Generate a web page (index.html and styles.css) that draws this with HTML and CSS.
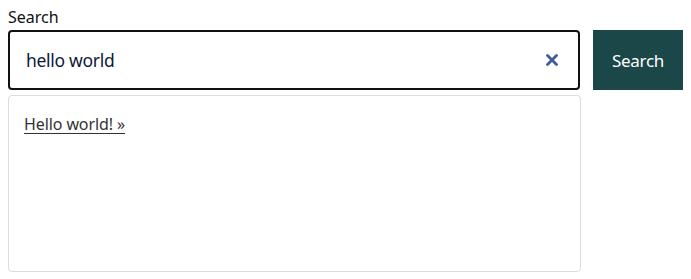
FILE: index.html
```html
<!DOCTYPE html>
<html>
<head>
<meta charset="utf-8">
<link rel="stylesheet" href="styles.css">
</head>
<body>
<div class="search">
  <label class="label" for="q">Search</label>
  <div class="row">
    <div class="field">
      <div class="input-box">
        <span class="value">hello world</span>
        <svg class="clear" width="12" height="12" viewBox="0 0 12 12"><path d="M1.5 1.5 L10.5 10.5 M10.5 1.5 L1.5 10.5" stroke="#3d5c99" stroke-width="2.8" stroke-linecap="round"/></svg>
      </div>
      <div class="dropdown">
        <a class="result" href="#">Hello world! »</a>
      </div>
    </div>
    <button class="btn">Search</button>
  </div>
</div>
</body>
</html>
```
FILE: styles.css
```css
html, body { margin: 0; padding: 0; background: #fff; }
body { font-family: "Noto Sans", "Open Sans", sans-serif; color: #111; }
.search { padding: 4px 8px 0 8px; }
.label { display: block; font-size: 16px; line-height: 26px; height: 26px; color: #111; }
.row { display: flex; align-items: flex-start; gap: 12px; }
.field { width: 573px; display: flex; flex-direction: column; gap: 5px; }
.input-box {
  box-sizing: border-box; height: 60px; width: 572px;
  border: 2px solid #111; border-radius: 4px;
  display: flex; align-items: center; justify-content: space-between;
  padding: 0 20px 0 16px;
}
.value { font-size: 17.5px; color: #0b1a3a; letter-spacing: -0.3px; }
.clear { display: block; }
.dropdown {
  box-sizing: border-box; height: 177px; width: 573px;
  border: 1px solid #dcdcdc; border-radius: 4px;
  padding: 17px 15px;
}
.result { font-size: 16px; color: #333; text-decoration: underline; text-underline-offset: 3px; letter-spacing: -0.1px; }
.btn {
  height: 60px; width: 92px; border: 0; margin: 0; padding: 0;
  background: #1b4748; color: #fff;
  font-family: inherit; font-size: 17px; letter-spacing: -0.3px;
}
```
